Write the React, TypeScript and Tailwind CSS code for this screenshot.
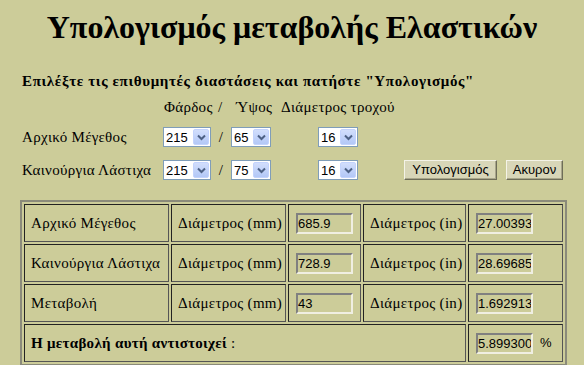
import { Fragment, ReactNode } from "react";

const serif = "font-['Liberation_Serif','Times_New_Roman',serif]";
const sans = "font-['Liberation_Sans',Arial,sans-serif]";

function Select({ value, width }: { value: string; width: string }) {
  return (
    <div className={`${width} h-[20px] flex items-center bg-white border border-[#7f9db9] ${sans} text-[13px] tracking-normal text-black`}>
      <span className="flex-1 pl-[2px] leading-none">{value}</span>
      <span className="w-[16px] h-[16px] mr-[1px] flex items-center justify-center rounded-[2px] bg-gradient-to-b from-[#d2defc] to-[#b3c8f7] border border-[#c3d3fd]">
        <svg width="9" height="7" viewBox="0 0 9 7">
          <path d="M1 1.5 L4.5 5 L8 1.5" fill="none" stroke="#4d6185" strokeWidth="2" />
        </svg>
      </span>
    </div>
  );
}

function Button({ children, width }: { children: ReactNode; width: string }) {
  return (
    <button
      className={`${width} h-[20px] flex items-center justify-center bg-[#d8d6b8] border border-t-[#f4f3e8] border-l-[#f4f3e8] border-b-[#6e6d58] border-r-[#6e6d58] shadow-[inset_-1px_-1px_0_#a8a68a] ${sans} text-[13px] tracking-normal text-black`}
    >
      {children}
    </button>
  );
}

function Field({ value }: { value: string }) {
  return (
    <div
      className={`w-[57px] h-[21px] flex items-center border-2 border-t-[#808080] border-l-[#808080] border-b-[#f0efe2] border-r-[#f0efe2] ${sans} text-[13px] tracking-normal text-black leading-none overflow-hidden whitespace-nowrap`}
    >
      {value}
    </div>
  );
}

function Cell({ children, className = "" }: { children?: ReactNode; className?: string }) {
  return (
    <div className={`h-[38px] flex items-center border border-t-[#222] border-l-[#222] border-b-[#555] border-r-[#555] ${className}`}>
      {children}
    </div>
  );
}

const rows = [
  { label: "Αρχικό Μέγεθος", mm: "685.9", inch: "27.00393" },
  { label: "Καινούργια Λάστιχα", mm: "728.9", inch: "28.69685" },
  { label: "Μεταβολή", mm: "43", inch: "1.692913" },
];

export default function App() {
  return (
    <div className={`w-[584px] h-[365px] overflow-hidden bg-[#cccc99] text-black ${serif} tracking-[0.3px]`}>
      <h1 className="pt-[9px] text-center text-[32px] font-bold leading-[37px] tracking-normal">
        Υπολογισμός μεταβολής Ελαστικών
      </h1>

      <p className="mt-[27px] pl-[22px] text-[15px] font-bold leading-[17px] tracking-[0.65px] whitespace-nowrap">
        Επιλέξτε τις επιθυμητές διαστάσεις και πατήστε "Υπολογισμός"
      </p>

      <div className="mt-[9px] pl-[164px] flex text-[15px] leading-[17px] whitespace-nowrap">
        <span className="w-[54px]">Φάρδος</span>
        <span className="w-[18px]">/</span>
        <span className="w-[45px]">Ύψος</span>
        <span>Διάμετρος τροχού</span>
      </div>

      <div className="mt-[11px] pl-[22px] flex items-center h-[20px] text-[15px]">
        <span className="w-[141px] whitespace-nowrap">Αρχικό Μέγεθος</span>
        <Select value="215" width="w-[48px]" />
        <span className="w-[20px] text-center">/</span>
        <Select value="65" width="w-[40px]" />
        <span className="w-[47px]" />
        <Select value="16" width="w-[40px]" />
      </div>

      <div className="mt-[13px] pl-[22px] flex items-center h-[20px] text-[15px]">
        <span className="w-[141px] whitespace-nowrap">Καινούργια Λάστιχα</span>
        <Select value="215" width="w-[48px]" />
        <span className="w-[20px] text-center">/</span>
        <Select value="75" width="w-[40px]" />
        <span className="w-[47px]" />
        <Select value="16" width="w-[40px]" />
        <span className="w-[46px]" />
        <Button width="w-[93px]">Υπολογισμός</Button>
        <span className="w-[9px]" />
        <Button width="w-[57px]">Ακυρον</Button>
      </div>

      <div className="mt-[20px] ml-[20px] w-[547px] grid grid-cols-[145px_115px_73px_103px_95px] gap-[2px] p-[2px] border-2 border-[#8a8a7a] text-[15px]">
        {rows.map((r) => (
          <Fragment key={r.label}>
            <Cell className="pl-[6px] whitespace-nowrap">{r.label}</Cell>
            <Cell className="pl-[6px] whitespace-nowrap">Διάμετρος (mm)</Cell>
            <Cell className="pl-[7px]"><Field value={r.mm} /></Cell>
            <Cell className="pl-[6px] whitespace-nowrap">Διάμετρος (in)</Cell>
            <Cell className="pl-[7px]"><Field value={r.inch} /></Cell>
          </Fragment>
        ))}
        <Cell className="col-span-4 pl-[6px]">
          <b>Η μεταβολή αυτή αντιστοιχεί</b>&nbsp;:
        </Cell>
        <Cell className="pl-[7px]">
          <Field value="5.899300" />
          <span className={`ml-[7px] ${sans} text-[13px]`}>%</span>
        </Cell>
      </div>
    </div>
  );
}
